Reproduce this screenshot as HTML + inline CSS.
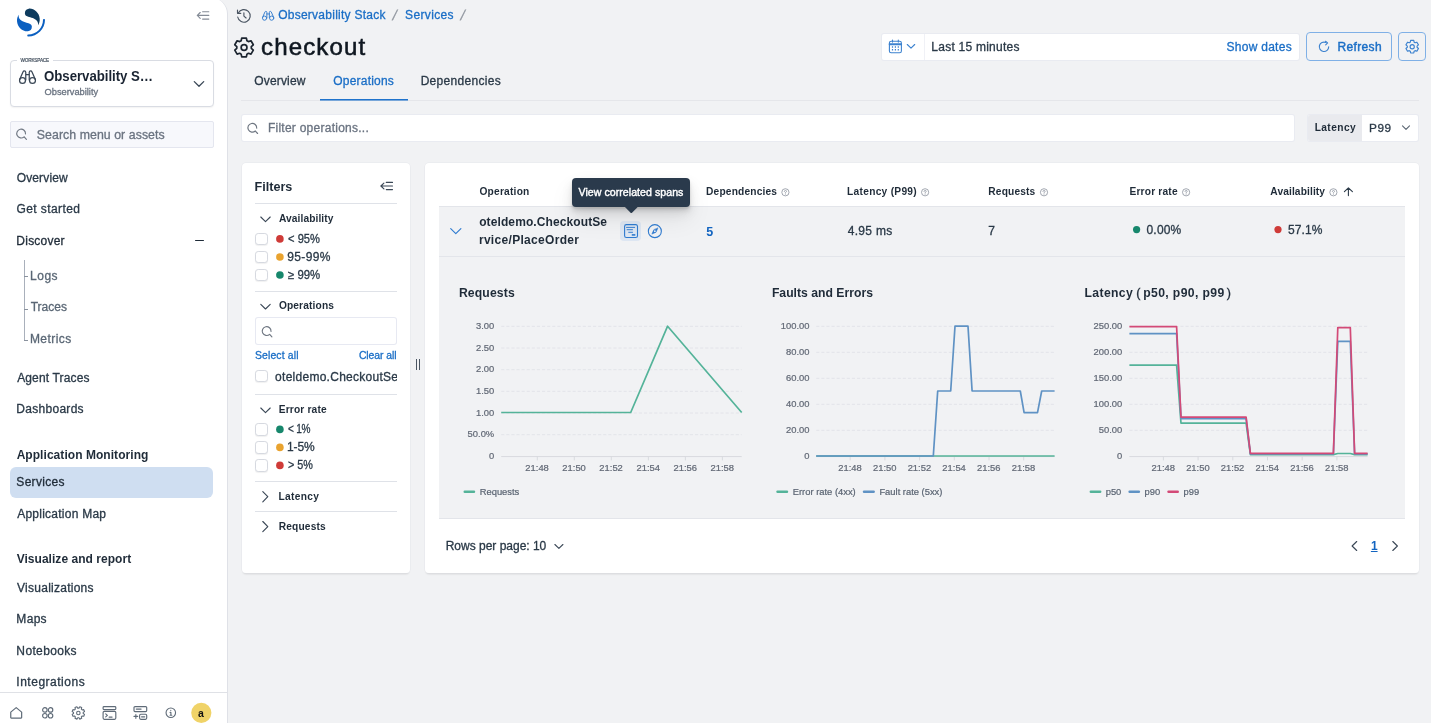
<!DOCTYPE html>
<html lang="en">
<head>
<meta charset="utf-8">
<title>checkout - Services - Observability Stack</title>
<style>
*{box-sizing:border-box;margin:0;padding:0}
html,body{width:1431px;height:723px;overflow:hidden}
body{position:relative;background:#f1f2f4;font-family:"Liberation Sans",Arial,sans-serif;font-size:12px;color:#2a3947}
a{color:inherit;text-decoration:none}
ul{list-style:none}
button{font:inherit;background:none;border:0}
h1,h2,h3{font-size:inherit;font-weight:inherit}
figure{margin:0}
.abs{position:absolute}
.t{position:absolute;white-space:nowrap;line-height:16px;font-size:12px;-webkit-text-stroke-width:.3px}
svg{position:absolute;overflow:visible}
#side{position:absolute;left:0;top:0;width:228px;height:723px;overflow:hidden;will-change:transform}
#main{position:absolute;left:0;top:0;width:1431px;height:723px;overflow:hidden;will-change:transform}
#sidebg{position:absolute;left:0;top:-2px;width:228px;height:725px;background:#fff;border-right:1px solid #dfe1e7;border-top-right-radius:16px}
#ws{position:absolute;left:10px;top:60.4px;width:204px;height:46.3px;border:1px solid #d9dce3;border-radius:4px;background:#fff;box-shadow:0 1px 1.5px rgba(0,0,0,.05)}
#srch{position:absolute;left:10px;top:121px;width:204px;height:26.8px;border:1px solid #e4e6ef;border-radius:2px;background:#f7f8fc}
.sel{position:absolute;left:10px;top:466.7px;width:203.3px;height:31.5px;border-radius:6px;background:#cfdef1}
#foot{position:absolute;left:0;top:692px;width:227px;height:31px;border-top:1px solid #dfe1e6;background:#fff}
.panel{position:absolute;background:#fff;border-radius:4px;box-shadow:0 0 0 .6px #e6e7eb,0 2px 2px -1px rgba(0,0,0,.17)}
.field{position:absolute;background:#fff;border-radius:2px;box-shadow:0 0 0 1px #e9ebf1}
.btn{position:absolute;border:1px solid #7fb0e6;border-radius:4px;background:transparent}
.chk{position:absolute;width:12.6px;height:12.6px;border:1px solid #d6d9e0;border-radius:3.2px;background:#fff;box-shadow:0 1px 1px rgba(0,0,0,.06)}
.dot{position:absolute;border-radius:50%}
.tip{position:absolute;background:#2a3a4c;border-radius:4px;box-shadow:0 12px 24px 0 rgba(0,0,0,.08),0 6px 12px 0 rgba(0,0,0,.09),0 4px 4px 0 rgba(0,0,0,.09),0 2px 2px 0 rgba(0,0,0,.09)}
.tiparrow{width:10.6px;height:10.6px;background:#2a3a4c;transform:rotate(45deg);border-radius:1px}
.pl,.pr{font-weight:normal;font-size:12.5px;-webkit-text-stroke-width:.35px}
.pl{padding:0 2.4px 0 0;margin-left:-.6px}
.pr{padding:0 0 0 2.2px}
</style>
</head>
<body>
<aside id="side" aria-label="Primary navigation">
<div id="sidebg"></div>
<svg style="left:17px;top:8px" width="29" height="30" viewBox="0 -1.37 66.29 68.57" role="img" aria-label="OpenSearch"><path d="M61.7374 23.5C60.4878 23.5 59.4748 24.513 59.4748 25.7626C59.4748 44.3813 44.3813 59.4748 25.7626 59.4748C24.513 59.4748 23.5 60.4878 23.5 61.7374C23.5 62.987 24.513 64 25.7626 64C46.8805 64 64 46.8805 64 25.7626C64 24.513 62.987 23.5 61.7374 23.5Z" fill="#0b5fc0"/><path d="M48.0814 38C50.2572 34.4505 52.3615 29.7178 51.9475 23.0921C51.0899 9.36725 38.6589 -1.04463 26.9206 0.0837327C22.3253 0.525465 17.6068 4.2712 18.026 10.9805C18.2082 13.8961 19.6352 15.6169 21.9544 16.9399C24.1618 18.1992 26.9978 18.9969 30.2128 19.9011C34.0962 20.9934 38.6009 22.2203 42.063 24.7717C46.2125 27.8295 49.0491 31.3743 48.0814 38Z" fill="#0d3b5e"/><path d="M3.91861 14C1.74276 17.5495 -0.361506 22.2822 0.0524931 28.9079C0.910072 42.6327 13.3411 53.0446 25.0794 51.9163C29.6747 51.4745 34.3932 47.7288 33.974 41.0195C33.7918 38.1039 32.3647 36.3831 30.0456 35.0601C27.8382 33.8008 25.0022 33.0031 21.7872 32.0989C17.9038 31.0066 13.3991 29.7797 9.93694 27.2283C5.78746 24.1705 2.95092 20.6257 3.91861 14Z" fill="#0b5fc0"/></svg>
<svg style="left:195px;top:9px" width="17" height="14" viewBox="0 0 17 14"><g fill="none" stroke="#858c97" stroke-width="1.15" stroke-linecap="round" stroke-linejoin="round"><path d="M7.6 2.7H13.8M2.3 6.4H13.8M7.6 10.1H13.8M5.2 3.5L2.3 6.4L5.2 9.3"/></g></svg>
<div id="ws">
<span class="wslabel"></span>
</div>
<span class="abs" style="left:17px;top:57px;width:36px;height:6px;background:#fff"></span>
<span class="t" style="left:20.49px;top:58px;font-size:4.7px;line-height:6px;color:#3a4756;letter-spacing:-0.18px;-webkit-text-stroke-width:.15px">WORKSPACE</span>
<svg style="left:18px;top:70px" width="20" height="16" viewBox="-0.9 -0.3 20 16"><g fill="none" stroke="#3a4756" stroke-width="1.25" stroke-linejoin="round" stroke-linecap="round"><circle cx="3.6" cy="10.2" r="2.95"/><circle cx="13.6" cy="10.2" r="2.95"/><path d="M0.75 9.3L4.1 1.6Q4.5 0.65 5.4 0.65Q6.8 0.65 6.85 2V9.6M16.45 9.3L13.1 1.6Q12.7 0.65 11.8 0.65Q10.4 0.65 10.35 2V9.6M6.85 4.3H10.35"/></g></svg>
<span class="t" style="left:43.94px;top:67px;font-size:14.4px;line-height:18px;color:#1a2432;font-weight:bold;-webkit-text-stroke-width:0;letter-spacing:-0.04px;transform:scaleX(0.92);transform-origin:0 50%">Observability S…</span>
<span class="t" style="left:44.52px;top:86px;font-size:9.3px;line-height:12px;color:#6a7380;letter-spacing:-0.01px">Observability</span>
<svg style="left:193px;top:80px" width="13" height="9" viewBox="0 0 13 9"><path d="M1.3 1.6L6 6.2L10.7 1.6" fill="none" stroke="#3a4756" stroke-width="1.3" stroke-linecap="round" stroke-linejoin="round"/></svg>
<div id="srch" role="search">
</div>
<svg style="left:15px;top:127px" width="14" height="15" viewBox="-0.5 -0.5 14 15"><g fill="none" stroke="#6f7782" stroke-width="1.15" stroke-linecap="round"><path d="M8.6 9.3A4.4 4.4 0 1 1 10 6.4"/><path d="M8.9 9.6L10.9 11.8"/></g></svg>
<span class="t" style="left:36.8px;top:127px;font-size:12.3px;color:#6a7380;letter-spacing:0.07px">Search menu or assets</span>
<nav><ul class="nav">
<li><a class="t" style="left:16.67px;top:170px;color:#2a3947;letter-spacing:0.15px">Overview</a></li>
<li><a class="t" style="left:16.44px;top:201px;color:#2a3947;letter-spacing:0.42px">Get started</a></li>
<li><a class="t" style="left:16.36px;top:233px;color:#1f2b38;letter-spacing:0.22px">Discover</a></li>
<li><a class="t" style="left:30px;top:268px;color:#5a6775;letter-spacing:0.52px">Logs</a></li>
<li><a class="t" style="left:30.7px;top:299px;color:#5a6775;letter-spacing:0.01px">Traces</a></li>
<li><a class="t" style="left:29.93px;top:331px;color:#5a6775;letter-spacing:0.45px">Metrics</a></li>
<li><a class="t" style="left:17.13px;top:370px;color:#2a3947;letter-spacing:0.16px">Agent Traces</a></li>
<li><a class="t" style="left:16.36px;top:401px;color:#2a3947;letter-spacing:0.28px">Dashboards</a></li>
<li class="hd"><span class="t" style="left:16.65px;top:447px;color:#1f2b38;font-weight:bold;-webkit-text-stroke-width:0;letter-spacing:0.05px">Application Monitoring</span></li>
<li><span class="sel"></span><a class="t" style="left:16.36px;top:474px;color:#1f2b38;letter-spacing:0.29px">Services</a></li>
<li><a class="t" style="left:17.13px;top:506px;color:#2a3947;letter-spacing:0.25px">Application Map</a></li>
<li class="hd"><span class="t" style="left:16.64px;top:551px;color:#1f2b38;font-weight:bold;-webkit-text-stroke-width:0;letter-spacing:0.04px">Visualize and report</span></li>
<li><a class="t" style="left:17.09px;top:580px;color:#2a3947;letter-spacing:0.25px">Visualizations</a></li>
<li><a class="t" style="left:16.36px;top:611px;color:#2a3947;letter-spacing:0.30px">Maps</a></li>
<li><a class="t" style="left:16.36px;top:643px;color:#2a3947;letter-spacing:0.36px">Notebooks</a></li>
<li><a class="t" style="left:16.33px;top:674px;color:#2a3947;letter-spacing:0.51px">Integrations</a></li>
</ul></nav>
<span class="abs" style="left:195.4px;top:239.6px;width:8.8px;height:1.7px;background:#1f2b38;border-radius:1px"></span>
<span class="abs" style="left:24px;top:260px;width:1px;height:81px;background:#a9b0bb"></span>
<span class="abs" style="left:24px;top:276.3px;width:3.5px;height:1px;background:#8a929e"></span>
<span class="abs" style="left:24px;top:308.5px;width:3.5px;height:1px;background:#8a929e"></span>
<span class="abs" style="left:24px;top:340.2px;width:3.5px;height:1px;background:#8a929e"></span>
<div id="foot"></div>
<svg style="left:10px;top:706px" width="14" height="14" viewBox="-0.1 -0.9 14 14"><path d="M0.65 10.6V5.2L6.1 0.75L11.55 5.2V10.6Q11.55 11.15 11 11.15H1.2Q0.65 11.15 0.65 10.6Z" fill="none" stroke="#5f6b78" stroke-width="1.2" stroke-linejoin="round"/></svg>
<svg style="left:42px;top:707px" width="13" height="13" viewBox="0 0 13 13"><g fill="none" stroke="#5f6b78" stroke-width="1.15"><circle cx="2.85" cy="2.9" r="2.25"/><circle cx="8.55" cy="2.9" r="2.25"/><circle cx="2.85" cy="8.7" r="2.25"/><circle cx="8.55" cy="8.7" r="2.25"/></g></svg>
<svg style="left:71px;top:706px" width="16" height="15" viewBox="-0.4 0 16 15"><g fill="none" stroke="#5f6b78" stroke-width="1.1" stroke-linejoin="round"><path d="M11.81 7.55 L13.13 8.40 L12.35 10.29 L10.81 9.96 L9.96 10.81 L10.29 12.35 L8.40 13.13 L7.55 11.81 L6.35 11.81 L5.50 13.13 L3.61 12.35 L3.94 10.81 L3.09 9.96 L1.55 10.29 L0.77 8.40 L2.09 7.55 L2.09 6.35 L0.77 5.50 L1.55 3.61 L3.09 3.94 L3.94 3.09 L3.61 1.55 L5.50 0.77 L6.35 2.09 L7.55 2.09 L8.40 0.77 L10.29 1.55 L9.96 3.09 L10.81 3.94 L12.35 3.61 L13.13 5.50 L11.81 6.35Z"/><circle cx="6.95" cy="6.95" r="1.75"/></g></svg>
<svg style="left:102px;top:706px" width="16" height="15" viewBox="-0.5 0 16 15"><g fill="none" stroke="#5f6b78" stroke-width="1.15" stroke-linejoin="round" stroke-linecap="round"><rect x="0.6" y="0.6" width="12.7" height="3" rx="0.9"/><rect x="0.6" y="5.4" width="12.7" height="7.9" rx="1.2"/><path d="M3.2 7.9L4.9 9.4L3.2 10.9M6.6 11.1H9.6"/></g></svg>
<svg style="left:133px;top:706px" width="16" height="15" viewBox="-0.4 0 16 15"><g fill="none" stroke="#5f6b78" stroke-width="1.15" stroke-linejoin="round" stroke-linecap="round"><rect x="0.6" y="0.6" width="12.7" height="5" rx="1"/><path d="M3 3.1H7.6" stroke-width="1.4"/><rect x="6.2" y="8.2" width="7.1" height="5.1" rx="1.2"/><path d="M8.2 10.8H11.3" stroke-width="1.3"/><path d="M0.6 10.4H4.3M2.45 8.5V12.3"/></g></svg>
<svg style="left:165px;top:707px" width="13" height="13" viewBox="-0.3 -0.3 13 13"><g fill="none" stroke="#5f6b78" stroke-width="1.1" stroke-linecap="round"><circle cx="5.5" cy="5.5" r="4.75"/><path d="M5.6 5.1V7.9M4.8 5.1H5.6M4.8 8H6.5"/><circle cx="5.5" cy="3.1" r="0.55" fill="#5f6b78" stroke="none"/></g></svg>
<svg style="left:191px;top:702px" width="22" height="22" viewBox="-0.2 -0.7 22 22"><circle cx="10.1" cy="10.1" r="10.1" fill="#f0d368"/></svg>
<span class="t" style="left:198.06px;top:707px;font-size:10.5px;line-height:12px;color:#111;font-weight:bold;-webkit-text-stroke-width:0">a</span>
</aside>
<main id="main">
<header id="top">
<nav aria-label="Breadcrumb">
<svg style="left:236px;top:8px" width="18" height="17" viewBox="-0.1 -0.4 18 17"><g fill="none" stroke="#4a5562" stroke-width="1.15" stroke-linecap="round" stroke-linejoin="round"><path d="M2.2 4.6A6.3 6.3 0 1 1 1.6 8.6"/><path d="M1.4 1.6V4.9H4.7"/><path d="M7.8 4.3V7.7L10 9.6"/></g></svg>
<svg style="left:262px;top:10px" width="14" height="12" viewBox="0 -1.27 19.72 16.9"><g fill="none" stroke="#3c82cf" stroke-width="1.40845" stroke-linejoin="round" stroke-linecap="round"><circle cx="3.6" cy="10.2" r="2.95"/><circle cx="13.6" cy="10.2" r="2.95"/><path d="M0.75 9.3L4.1 1.6Q4.5 0.65 5.4 0.65Q6.8 0.65 6.85 2V9.6M16.45 9.3L13.1 1.6Q12.7 0.65 11.8 0.65Q10.4 0.65 10.35 2V9.6M6.85 4.3H10.35"/></g></svg>
<a class="t" style="left:278.13px;top:7px;color:#1a6ec6;letter-spacing:0.26px">Observability Stack</a>
<span class="t" style="left:392.7px;top:7px;font-size:14.5px;color:#90969f;-webkit-text-stroke-width:.15px;transform:skewX(-13deg)">/</span>
<a class="t" style="left:405.02px;top:7px;color:#1a6ec6;letter-spacing:0.36px">Services</a>
<span class="t" style="left:461.3px;top:7px;font-size:14.5px;color:#90969f;-webkit-text-stroke-width:.15px;transform:skewX(-13deg)">/</span>
</nav>
<svg style="left:233px;top:36px" width="23" height="24" viewBox="-0.3 -0.7 23 24"><g fill="none" stroke="#1c2530" stroke-width="1.7" stroke-linejoin="round"><path d="M13.63 17.46 L13.08 20.12 L8.42 20.12 L7.87 17.46 L6.38 16.60 L3.80 17.45 L1.48 13.42 L3.50 11.61 L3.50 9.89 L1.48 8.08 L3.80 4.05 L6.38 4.90 L7.87 4.04 L8.42 1.38 L13.08 1.38 L13.63 4.04 L15.12 4.90 L17.70 4.05 L20.02 8.08 L18.00 9.89 L18.00 11.61 L20.02 13.42 L17.70 17.45 L15.12 16.60Z"/><circle cx="10.75" cy="10.75" r="2.9"/></g></svg>
<h1 class="t" style="left:261.08px;top:32px;font-size:24.1px;line-height:30px;color:#0f1720;letter-spacing:1.08px;font-weight:normal;-webkit-text-stroke-width:.55px">checkout</h1>
<div class="field" style="left:881.5px;top:33.5px;width:417px;height:26.5px"></div>
<span class="abs" style="left:924px;top:34px;width:1px;height:26px;background:#f0f1f6"></span>
<svg style="left:888px;top:39px" width="16" height="16" viewBox="-0.5 -0.5 16 16"><g fill="none" stroke="#3c82cf" stroke-width="1.1" stroke-linejoin="round" stroke-linecap="round"><rect x="0.9" y="1.8" width="12" height="11.4" rx="1.8"/><path d="M1.2 4.7H12.6" stroke-width="2"/><path d="M4 0.6V2.6M9.8 0.6V2.6"/><path d="M3.4 7.6H4.6M6.3 7.6H7.5M9.2 7.6H10.4M3.4 10.2H4.6M6.3 10.2H7.5M9.2 10.2H10.4" stroke-width="1.5" stroke-linecap="butt"/></g></svg>
<svg style="left:906px;top:43px" width="11" height="8" viewBox="-0.5 -0.5 11 8"><path d="M0.8 1L4.5 4.6L8.2 1" fill="none" stroke="#3c82cf" stroke-width="1.1" stroke-linecap="round" stroke-linejoin="round"/></svg>
<span class="t" style="left:931.36px;top:39px;color:#2a3947;letter-spacing:0.24px">Last 15 minutes</span>
<a class="t" style="left:1226.51px;top:39px;color:#1a6ec6;letter-spacing:0.27px">Show dates</a>
<button class="btn" style="left:1306px;top:32px;width:86px;height:29px" aria-label="Refresh"></button>
<svg style="left:1318px;top:40px" width="14" height="14" viewBox="-0.3 -0.6 14 14"><g fill="none" stroke="#3c82cf" stroke-width="1.15" stroke-linecap="round" stroke-linejoin="round"><path d="M10.4 6.2A4.7 4.7 0 1 1 7.6 1.9"/><path d="M7.2 0.7L9.3 2.3L7.4 4.2" /></g></svg>
<span class="t" style="left:1337.4px;top:39px;color:#1a6ec6;letter-spacing:0.36px;-webkit-text-stroke-width:.42px">Refresh</span>
<button class="btn" style="left:1398px;top:32px;width:28px;height:29px" aria-label="Settings"></button>
<svg style="left:1404px;top:39px" width="17" height="17" viewBox="-0.7 -0.2 17 17"><g fill="none" stroke="#3c82cf" stroke-width="1.15" stroke-linejoin="round"><path d="M9.43 12.00 L9.07 13.81 L5.93 13.81 L5.57 12.00 L4.57 11.43 L2.82 12.01 L1.25 9.30 L2.63 8.08 L2.63 6.92 L1.25 5.70 L2.82 2.99 L4.57 3.57 L5.57 3.00 L5.93 1.19 L9.07 1.19 L9.43 3.00 L10.43 3.57 L12.18 2.99 L13.75 5.70 L12.37 6.92 L12.37 8.08 L13.75 9.30 L12.18 12.01 L10.43 11.43Z"/><circle cx="7.5" cy="7.5" r="2.1"/></g></svg>
<div role="tablist">
<span class="abs" style="left:241px;top:99.6px;width:1178px;height:1px;background:#e5e6ea"></span>
<span class="t" style="left:254.33px;top:73px;color:#2a3947;letter-spacing:0.15px" role="tab">Overview</span>
<span class="t" style="left:333.29px;top:73px;color:#1a6ec6;letter-spacing:0.20px" role="tab" aria-selected="true">Operations</span>
<span class="t" style="left:420.63px;top:73px;color:#2a3947;letter-spacing:0.30px" role="tab">Dependencies</span>
<span class="abs" style="left:319.7px;top:99px;width:88.1px;height:2px;background:linear-gradient(#1f73cc 50%,rgba(31,115,204,.55) 50%)"></span>
</div>
<div class="field" style="left:241.5px;top:114.7px;width:1052px;height:26.5px"></div>
<svg style="left:246px;top:121px" width="14" height="15" viewBox="-0.7 -0.7 14 15"><g fill="none" stroke="#6f7782" stroke-width="1.15" stroke-linecap="round"><path d="M8.6 9.3A4.4 4.4 0 1 1 10 6.4"/><path d="M8.9 9.6L10.9 11.8"/></g></svg>
<span class="t" style="left:267.94px;top:120px;color:#6a7380;letter-spacing:0.25px">Filter operations...</span>
<div class="field" style="left:1308px;top:114.7px;width:110px;height:26.5px"></div>
<span class="abs" style="left:1307.5px;top:114.7px;width:54.5px;height:26.5px;background:#e9eaee;border-radius:2px 0 0 2px"></span>
<span class="t" style="left:1314.66px;top:120px;font-size:10.2px;color:#1f2b38;font-weight:bold;-webkit-text-stroke-width:0;letter-spacing:0.41px">Latency</span>
<span class="t" style="left:1368.9px;top:120px;font-size:11.8px;color:#2a3947;letter-spacing:0.65px">P99</span>
<svg style="left:1401px;top:124px" width="11" height="8" viewBox="-0.6 -0.9 11 8"><path d="M0.9 1L4.4 4.4L7.9 1" fill="none" stroke="#5a6572" stroke-width="1.1" stroke-linecap="round" stroke-linejoin="round"/></svg>
</header>
<section class="panel" style="left:241.5px;top:162.7px;width:168.6px;height:410.3px" aria-label="Filters"></section>
<div id="filters">
<h2 class="t" style="left:254.6px;top:178px;font-size:12.6px;line-height:18px;color:#1f2b38;font-weight:bold;-webkit-text-stroke-width:0;letter-spacing:-0.02px">Filters</h2>
<svg style="left:379px;top:180px" width="16" height="14" viewBox="-0.7 -0.2 16 14"><g fill="none" stroke="#3a4756" stroke-width="1.15" stroke-linecap="round" stroke-linejoin="round"><path d="M6.6 2.2H12.8M1.2 5.8H12.8M6.6 9.4H12.8M4.2 2.9L1.2 5.8L4.2 8.7"/></g></svg>
<span class="abs" style="left:255.3px;top:203.0px;width:141.3px;height:1px;background:#dfe2e8"></span>
<svg style="left:260px;top:216px" width="12" height="9" viewBox="0 -0.2 12 9"><path d="M0.8 0.8L5.5 5.4L10.2 0.8" fill="none" stroke="#3a4756" stroke-width="1.1" stroke-linecap="round" stroke-linejoin="round"/></svg>
<h3 class="t" style="left:278.91px;top:211px;font-size:10.2px;color:#1f2b38;font-weight:bold;-webkit-text-stroke-width:0;letter-spacing:0.10px">Availability</h3>
<span class="chk" style="left:255.3px;top:232.7px"></span>
<svg style="left:274px;top:233px" width="12" height="12" viewBox="-0.9 -0.9 12 12"><circle cx="5" cy="5" r="3.8" fill="#cf3b38"/></svg>
<label class="t" style="left:287.66px;top:231px;color:#2a3947;letter-spacing:0.01px;transform:scaleX(0.93);transform-origin:0 50%">&lt; 95%</label>
<span class="chk" style="left:255.3px;top:250.7px"></span>
<svg style="left:274px;top:252px" width="12" height="11" viewBox="-0.9 0 12 11"><circle cx="5" cy="5" r="3.8" fill="#e9a32f"/></svg>
<label class="t" style="left:287.27px;top:249px;color:#2a3947;letter-spacing:0.34px">95-99%</label>
<span class="chk" style="left:255.3px;top:268.8px"></span>
<svg style="left:274px;top:270px" width="12" height="11" viewBox="-0.9 0 12 11"><circle cx="5" cy="5" r="3.8" fill="#17876c"/></svg>
<label class="t" style="left:287.74px;top:267px;color:#2a3947;letter-spacing:-0.01px;transform:scaleX(0.95);transform-origin:0 50%">≥ 99%</label>
<span class="abs" style="left:255.3px;top:290.9px;width:141.3px;height:1px;background:#dfe2e8"></span>
<svg style="left:260px;top:303px" width="12" height="9" viewBox="0 -0.6 12 9"><path d="M0.8 0.8L5.5 5.4L10.2 0.8" fill="none" stroke="#3a4756" stroke-width="1.1" stroke-linecap="round" stroke-linejoin="round"/></svg>
<h3 class="t" style="left:278.89px;top:298px;font-size:10.2px;color:#1f2b38;font-weight:bold;-webkit-text-stroke-width:0;letter-spacing:0.14px">Operations</h3>
<div class="field" style="left:255.8px;top:317.8px;width:140.3px;height:26.4px;box-shadow:0 0 0 1px #e7e9f2"></div>
<svg style="left:261px;top:325px" width="13" height="14" viewBox="0 0 13 14"><g fill="none" stroke="#6f7782" stroke-width="1.15" stroke-linecap="round"><path d="M8.6 9.3A4.4 4.4 0 1 1 10 6.4"/><path d="M8.9 9.6L10.9 11.8"/></g></svg>
<a class="t" style="left:254.9px;top:348px;font-size:10.4px;color:#1a6ec6;letter-spacing:0.17px">Select all</a>
<a class="t" style="left:358.92px;top:348px;font-size:10.4px;color:#1a6ec6;letter-spacing:-0.06px">Clear all</a>
<span class="chk" style="left:255.3px;top:369.6px"></span>
<span class="abs" style="left:275px;top:366px;width:121.8px;height:20px;overflow:hidden"><label class="t" style="left:0.1px;top:3px;color:#2a3947;letter-spacing:0.27px">oteldemo.CheckoutService/PlaceOrder</label></span>
<span class="abs" style="left:255.3px;top:394.3px;width:141.3px;height:1px;background:#dfe2e8"></span>
<svg style="left:260px;top:407px" width="12" height="9" viewBox="0 -0.2 12 9"><path d="M0.8 0.8L5.5 5.4L10.2 0.8" fill="none" stroke="#3a4756" stroke-width="1.1" stroke-linecap="round" stroke-linejoin="round"/></svg>
<h3 class="t" style="left:278.7px;top:402px;font-size:10.2px;color:#1f2b38;font-weight:bold;-webkit-text-stroke-width:0;letter-spacing:0.17px">Error rate</h3>
<span class="chk" style="left:255.3px;top:423.1px"></span>
<svg style="left:274px;top:424px" width="12" height="12" viewBox="-0.9 -0.4 12 12"><circle cx="5" cy="5" r="3.8" fill="#17876c"/></svg>
<label class="t" style="left:287.93px;top:421px;color:#2a3947;letter-spacing:-0.30px;transform:scaleX(0.84);transform-origin:0 50%">&lt; 1%</label>
<span class="chk" style="left:255.3px;top:441px"></span>
<svg style="left:274px;top:442px" width="12" height="12" viewBox="-0.9 -0.4 12 12"><circle cx="5" cy="5" r="3.8" fill="#e9a32f"/></svg>
<label class="t" style="left:287.1px;top:439px;color:#2a3947;letter-spacing:-0.15px">1-5%</label>
<span class="chk" style="left:255.3px;top:459px"></span>
<svg style="left:274px;top:460px" width="12" height="12" viewBox="-0.9 -0.4 12 12"><circle cx="5" cy="5" r="3.8" fill="#cf3b38"/></svg>
<label class="t" style="left:287.56px;top:457px;color:#2a3947;letter-spacing:-0.00px;transform:scaleX(0.9);transform-origin:0 50%">&gt; 5%</label>
<span class="abs" style="left:255.3px;top:481.3px;width:141.3px;height:1px;background:#dfe2e8"></span>
<svg style="left:261px;top:490px" width="9" height="14" viewBox="-0.9 -0.7 9 14"><path d="M0.9 0.9L5.9 6L0.9 11.1" fill="none" stroke="#3a4756" stroke-width="1.15" stroke-linecap="round" stroke-linejoin="round"/></svg>
<h3 class="t" style="left:278.58px;top:489px;font-size:10.2px;color:#1f2b38;font-weight:bold;-webkit-text-stroke-width:0;letter-spacing:0.30px">Latency</h3>
<span class="abs" style="left:255.3px;top:510.9px;width:141.3px;height:1px;background:#dfe2e8"></span>
<svg style="left:261px;top:520px" width="9" height="14" viewBox="-0.9 -0.6 9 14"><path d="M0.9 0.9L5.9 6L0.9 11.1" fill="none" stroke="#3a4756" stroke-width="1.15" stroke-linecap="round" stroke-linejoin="round"/></svg>
<h3 class="t" style="left:278.65px;top:519px;font-size:10.2px;color:#1f2b38;font-weight:bold;-webkit-text-stroke-width:0;letter-spacing:0.17px">Requests</h3>
</div>
<span class="abs" style="left:415.6px;top:359px;width:1.2px;height:10.6px;background:#4a5562"></span>
<span class="abs" style="left:418.6px;top:359px;width:1.2px;height:10.6px;background:#4a5562"></span>
<section class="panel" style="left:425.2px;top:162.7px;width:993.6px;height:410.3px" aria-label="Operations"></section>
<div id="ops" role="table">
<span class="abs" style="left:438.6px;top:206.3px;width:966.2px;height:312.4px;background:#f1f2f4"></span>
<span class="abs" style="left:438.6px;top:206px;width:966.2px;height:1px;background:#e3e5ea"></span>
<span class="abs" style="left:438.6px;top:256px;width:966.2px;height:1px;background:#e3e5ea"></span>
<span class="abs" style="left:438.6px;top:518.2px;width:966.2px;height:1px;background:#e3e5ea"></span>
<span class="t" style="left:479.38px;top:184px;font-size:10.2px;color:#1f2b38;font-weight:bold;-webkit-text-stroke-width:0;letter-spacing:0.23px" role="columnheader">Operation</span>
<span class="t" style="left:706.1px;top:184px;font-size:10.2px;color:#1f2b38;font-weight:bold;-webkit-text-stroke-width:0;letter-spacing:0.17px" role="columnheader">Dependencies</span>
<svg style="left:781px;top:188px" width="10" height="10" viewBox="-0.2 -0.1 10 10"><circle cx="4.2" cy="4.2" r="3.6" fill="none" stroke="#8b929d" stroke-width="0.8"/><path d="M3.1 3.4Q3.2 2.3 4.2 2.3Q5.3 2.3 5.3 3.3Q5.3 4 4.2 4.5V5.1" fill="none" stroke="#8b929d" stroke-width="0.75" stroke-linecap="round"/><circle cx="4.2" cy="6.2" r="0.45" fill="#8b929d"/></svg>
<span class="t" style="left:847.1px;top:184px;font-size:10.2px;color:#1f2b38;font-weight:bold;-webkit-text-stroke-width:0;letter-spacing:0.28px" role="columnheader">Latency (P99)</span>
<svg style="left:920px;top:188px" width="11" height="10" viewBox="-0.9 -0.1 11 10"><circle cx="4.2" cy="4.2" r="3.6" fill="none" stroke="#8b929d" stroke-width="0.8"/><path d="M3.1 3.4Q3.2 2.3 4.2 2.3Q5.3 2.3 5.3 3.3Q5.3 4 4.2 4.5V5.1" fill="none" stroke="#8b929d" stroke-width="0.75" stroke-linecap="round"/><circle cx="4.2" cy="6.2" r="0.45" fill="#8b929d"/></svg>
<span class="t" style="left:988.3px;top:184px;font-size:10.2px;color:#1f2b38;font-weight:bold;-webkit-text-stroke-width:0;letter-spacing:0.16px" role="columnheader">Requests</span>
<svg style="left:1039px;top:188px" width="11" height="10" viewBox="-0.8 -0.1 11 10"><circle cx="4.2" cy="4.2" r="3.6" fill="none" stroke="#8b929d" stroke-width="0.8"/><path d="M3.1 3.4Q3.2 2.3 4.2 2.3Q5.3 2.3 5.3 3.3Q5.3 4 4.2 4.5V5.1" fill="none" stroke="#8b929d" stroke-width="0.75" stroke-linecap="round"/><circle cx="4.2" cy="6.2" r="0.45" fill="#8b929d"/></svg>
<span class="t" style="left:1129.4px;top:184px;font-size:10.2px;color:#1f2b38;font-weight:bold;-webkit-text-stroke-width:0;letter-spacing:0.20px" role="columnheader">Error rate</span>
<svg style="left:1181px;top:188px" width="11" height="10" viewBox="-0.9 -0.1 11 10"><circle cx="4.2" cy="4.2" r="3.6" fill="none" stroke="#8b929d" stroke-width="0.8"/><path d="M3.1 3.4Q3.2 2.3 4.2 2.3Q5.3 2.3 5.3 3.3Q5.3 4 4.2 4.5V5.1" fill="none" stroke="#8b929d" stroke-width="0.75" stroke-linecap="round"/><circle cx="4.2" cy="6.2" r="0.45" fill="#8b929d"/></svg>
<span class="t" style="left:1270.3px;top:184px;font-size:10.2px;color:#1f2b38;font-weight:bold;-webkit-text-stroke-width:0;letter-spacing:0.12px" role="columnheader">Availability</span>
<svg style="left:1329px;top:188px" width="10" height="10" viewBox="-0.2 -0.1 10 10"><circle cx="4.2" cy="4.2" r="3.6" fill="none" stroke="#8b929d" stroke-width="0.8"/><path d="M3.1 3.4Q3.2 2.3 4.2 2.3Q5.3 2.3 5.3 3.3Q5.3 4 4.2 4.5V5.1" fill="none" stroke="#8b929d" stroke-width="0.75" stroke-linecap="round"/><circle cx="4.2" cy="6.2" r="0.45" fill="#8b929d"/></svg>
<svg style="left:1343px;top:186px" width="12" height="12" viewBox="0 -0.6 12 12"><path d="M5.4 9V1.4M1.4 5L5.4 1.2L9.4 5" fill="none" stroke="#2a3947" stroke-width="1.1" stroke-linecap="round" stroke-linejoin="round"/></svg>
<svg style="left:449px;top:227px" width="14" height="9" viewBox="-0.8 -0.8 14 9"><path d="M0.9 0.9L6 5.9L11.1 0.9" fill="none" stroke="#2f7bd0" stroke-width="1.15" stroke-linecap="round" stroke-linejoin="round"/></svg>
<span class="t" style="left:479.2px;top:213px;line-height:18px;color:#1f2b38;font-weight:bold;-webkit-text-stroke-width:0;letter-spacing:0.10px">oteldemo.CheckoutSe</span>
<span class="t" style="left:478.92px;top:231px;line-height:18px;color:#1f2b38;font-weight:bold;-webkit-text-stroke-width:0;letter-spacing:0.31px">rvice/PlaceOrder</span>
<span class="abs" style="left:620.4px;top:220.7px;width:20.6px;height:20.3px;border-radius:4px;background:#dde6f2"></span>
<svg style="left:623px;top:223px" width="17" height="17" viewBox="-0.9 -0.9 17 17"><g fill="none" stroke="#2f7bd0" stroke-width="1.1" stroke-linecap="round" stroke-linejoin="round"><rect x="0.7" y="0.7" width="12.9" height="12.9" rx="1.8"/><path d="M2.6 3.5H10.8M3.2 5.8H8.6M4.8 8.4H8.6" stroke-width="0.95"/><path d="M7.9 11H11.4" stroke-width="1.6" stroke-linecap="butt"/></g></svg>
<svg style="left:647px;top:223px" width="17" height="17" viewBox="-0.6 -0.9 17 17"><g fill="none" stroke="#2f7bd0" stroke-width="1.1" stroke-linecap="round" stroke-linejoin="round"><circle cx="7.25" cy="7.25" r="6.5"/><path d="M10.2 4.3L8.4 8.4L4.3 10.2L6.1 6.1Z" fill="#2f7bd0" stroke-width="0.6"/><circle cx="7.25" cy="7.25" r="0.9" fill="#f1f2f4" stroke="none"/></g></svg>
<a class="t" style="left:706.26px;top:224px;font-size:12.5px;color:#1264c0;font-weight:bold;-webkit-text-stroke-width:0">5</a>
<span class="t" style="left:847.72px;top:223px;color:#2a3947;letter-spacing:0.32px">4.95 ms</span>
<span class="t" style="left:988.3px;top:223px;color:#2a3947">7</span>
<svg style="left:1131px;top:224px" width="12" height="12" viewBox="-0.6 -0.6 12 12"><circle cx="5" cy="5" r="3.6" fill="#17876c"/></svg>
<span class="t" style="left:1146.51px;top:222px;color:#2a3947;letter-spacing:0.19px">0.00%</span>
<svg style="left:1273px;top:224px" width="11" height="12" viewBox="0 -0.6 11 12"><circle cx="5" cy="5" r="3.6" fill="#cf3b38"/></svg>
<span class="t" style="left:1288px;top:222px;color:#2a3947;letter-spacing:0.09px">57.1%</span>
<div role="tooltip" class="tip" style="left:571.8px;top:178.2px;width:118.4px;height:28.6px"></div>
<span class="abs tiparrow" style="left:625.5px;top:200.2px"></span>
<span class="t" style="left:578.55px;top:184px;font-size:10.6px;color:#fff;letter-spacing:0.04px;-webkit-text-stroke-width:.4px">View correlated spans</span>
<span class="t" style="left:445.72px;top:538px;color:#2a3947;letter-spacing:-0.01px">Rows per page: 10</span>
<svg style="left:553px;top:543px" width="12" height="9" viewBox="-0.9 -0.3 12 9"><path d="M1 1.2L5 5L9 1.2" fill="none" stroke="#3a4756" stroke-width="1.1" stroke-linecap="round" stroke-linejoin="round"/></svg>
<svg style="left:1350px;top:540px" width="10" height="13" viewBox="-0.6 0 10 13"><path d="M6.1 1.5L1.5 6L6.1 10.5" fill="none" stroke="#3a4756" stroke-width="1.1" stroke-linecap="round" stroke-linejoin="round"/></svg>
<a class="t" style="left:1370.9px;top:538px;color:#1264c0;font-weight:bold;-webkit-text-stroke-width:0;text-decoration:underline">1</a>
<svg style="left:1391px;top:540px" width="9" height="13" viewBox="0 0 9 13"><path d="M1.8 1.5L6.4 6L1.8 10.5" fill="none" stroke="#3a4756" stroke-width="1.1" stroke-linecap="round" stroke-linejoin="round"/></svg>
</div>
<div id="charts">
<figure>
<figcaption class="t" style="left:458.9px;top:285px;font-size:12.2px;color:#1f2b38;font-weight:bold;-webkit-text-stroke-width:0;letter-spacing:0.13px">Requests</figcaption>
<svg style="left:0;top:0" width="1431" height="723" viewBox="0 0 1431 723" font-family="Liberation Sans, Arial, sans-serif" role="img" aria-label="Requests chart"><line x1="501.2" y1="326.35" x2="741.7" y2="326.35" stroke="#dfe1e7" stroke-width="0.8" stroke-dasharray="3.1 2"/><line x1="501.2" y1="348.02" x2="741.7" y2="348.02" stroke="#dfe1e7" stroke-width="0.8" stroke-dasharray="3.1 2"/><line x1="501.2" y1="369.68" x2="741.7" y2="369.68" stroke="#dfe1e7" stroke-width="0.8" stroke-dasharray="3.1 2"/><line x1="501.2" y1="391.35" x2="741.7" y2="391.35" stroke="#dfe1e7" stroke-width="0.8" stroke-dasharray="3.1 2"/><line x1="501.2" y1="413.02" x2="741.7" y2="413.02" stroke="#dfe1e7" stroke-width="0.8" stroke-dasharray="3.1 2"/><line x1="501.2" y1="434.68" x2="741.7" y2="434.68" stroke="#dfe1e7" stroke-width="0.8" stroke-dasharray="3.1 2"/><line x1="501.2" y1="456.55" x2="741.7" y2="456.55" stroke="#d6d8dd" stroke-width="0.9"/><line x1="537.3" y1="456.5" x2="537.3" y2="460.4" stroke="#d6d8dd" stroke-width="0.9"/><line x1="574.3" y1="456.5" x2="574.3" y2="460.4" stroke="#d6d8dd" stroke-width="0.9"/><line x1="611.3" y1="456.5" x2="611.3" y2="460.4" stroke="#d6d8dd" stroke-width="0.9"/><line x1="648.4" y1="456.5" x2="648.4" y2="460.4" stroke="#d6d8dd" stroke-width="0.9"/><line x1="685.4" y1="456.5" x2="685.4" y2="460.4" stroke="#d6d8dd" stroke-width="0.9"/><line x1="722.4" y1="456.5" x2="722.4" y2="460.4" stroke="#d6d8dd" stroke-width="0.9"/><polyline points="501.2,412.5 630.7,412.5 667.6,326.2 741.7,412.5" fill="none" stroke="#54b399" stroke-width="1.7" stroke-linejoin="round" stroke-linecap="butt"/><g font-size="9.4" fill="#626976" stroke="#626976" stroke-width=".22" text-anchor="end"><text x="494.2" y="328.9">3.00</text><text x="494.2" y="350.6">2.50</text><text x="494.2" y="372.2">2.00</text><text x="494.2" y="393.9">1.50</text><text x="494.2" y="415.6">1.00</text><text x="494.2" y="437.2">50.0%</text><text x="494.2" y="458.9">0</text></g><g font-size="9.4" fill="#626976" stroke="#626976" stroke-width=".22" text-anchor="middle"><text x="537.1" y="470.7">21:48</text><text x="574.1" y="470.7">21:50</text><text x="611.1" y="470.7">21:52</text><text x="648.2" y="470.7">21:54</text><text x="685.2" y="470.7">21:56</text><text x="722.2" y="470.7">21:58</text></g><line x1="464.7" y1="491.8" x2="474.0" y2="491.8" stroke="#54b399" stroke-width="2.4" stroke-linecap="round"/><g font-size="9.4" fill="#5a6472" stroke="#5a6472" stroke-width=".2"><text x="479.7" y="495.1">Requests</text></g></svg>
</figure>
<figure>
<figcaption class="t" style="left:771.9px;top:285px;font-size:12.2px;color:#1f2b38;font-weight:bold;-webkit-text-stroke-width:0;letter-spacing:0.01px">Faults and Errors</figcaption>
<svg style="left:0;top:0" width="1431" height="723" viewBox="0 0 1431 723" font-family="Liberation Sans, Arial, sans-serif" role="img" aria-label="Faults and Errors chart"><line x1="816.2" y1="326.35" x2="1054.6" y2="326.35" stroke="#dfe1e7" stroke-width="0.8" stroke-dasharray="3.1 2"/><line x1="816.2" y1="352.35" x2="1054.6" y2="352.35" stroke="#dfe1e7" stroke-width="0.8" stroke-dasharray="3.1 2"/><line x1="816.2" y1="378.35" x2="1054.6" y2="378.35" stroke="#dfe1e7" stroke-width="0.8" stroke-dasharray="3.1 2"/><line x1="816.2" y1="404.35" x2="1054.6" y2="404.35" stroke="#dfe1e7" stroke-width="0.8" stroke-dasharray="3.1 2"/><line x1="816.2" y1="430.35" x2="1054.6" y2="430.35" stroke="#dfe1e7" stroke-width="0.8" stroke-dasharray="3.1 2"/><line x1="816.2" y1="456.55" x2="1054.6" y2="456.55" stroke="#d6d8dd" stroke-width="0.9"/><line x1="850.2" y1="456.5" x2="850.2" y2="460.4" stroke="#d6d8dd" stroke-width="0.9"/><line x1="884.9" y1="456.5" x2="884.9" y2="460.4" stroke="#d6d8dd" stroke-width="0.9"/><line x1="919.6" y1="456.5" x2="919.6" y2="460.4" stroke="#d6d8dd" stroke-width="0.9"/><line x1="954.3" y1="456.5" x2="954.3" y2="460.4" stroke="#d6d8dd" stroke-width="0.9"/><line x1="989.0" y1="456.5" x2="989.0" y2="460.4" stroke="#d6d8dd" stroke-width="0.9"/><line x1="1023.7" y1="456.5" x2="1023.7" y2="460.4" stroke="#d6d8dd" stroke-width="0.9"/><polyline points="816.2,456.0 1054.6,456.0" fill="none" stroke="#54b399" stroke-width="1.7" stroke-linejoin="round" stroke-linecap="butt"/><polyline points="816.2,456.0 933.3,456.0 937.7,391.0 950.7,391.0 955.0,326.2 968.0,326.2 972.1,391.0 1020.3,391.0 1024.1,412.7 1037.5,412.7 1041.7,391.0 1054.6,391.0" fill="none" stroke="#5f92c4" stroke-width="1.7" stroke-linejoin="round" stroke-linecap="butt"/><g font-size="9.4" fill="#626976" stroke="#626976" stroke-width=".22" text-anchor="end"><text x="809.5" y="328.9">100.00</text><text x="809.5" y="354.9">80.00</text><text x="809.5" y="380.9">60.00</text><text x="809.5" y="406.9">40.00</text><text x="809.5" y="432.9">20.00</text><text x="809.5" y="458.9">0</text></g><g font-size="9.4" fill="#626976" stroke="#626976" stroke-width=".22" text-anchor="middle"><text x="850.0" y="470.7">21:48</text><text x="884.7" y="470.7">21:50</text><text x="919.4" y="470.7">21:52</text><text x="954.1" y="470.7">21:54</text><text x="988.8" y="470.7">21:56</text><text x="1023.5" y="470.7">21:58</text></g><line x1="777.5" y1="491.8" x2="787.0" y2="491.8" stroke="#54b399" stroke-width="2.4" stroke-linecap="round"/><line x1="864.0" y1="491.8" x2="873.7" y2="491.8" stroke="#5f92c4" stroke-width="2.4" stroke-linecap="round"/><g font-size="9.4" fill="#5a6472" stroke="#5a6472" stroke-width=".2"><text x="792.7" y="495.1">Error rate (4xx)</text><text x="879.4" y="495.1">Fault rate (5xx)</text></g></svg>
</figure>
<figure>
<figcaption class="t" style="left:1084.5px;top:285px;font-size:12.2px;color:#1f2b38;font-weight:bold;-webkit-text-stroke-width:0;letter-spacing:0.37px">Latency <span class="pl">(</span>p50, p90, p99<span class="pr">)</span></figcaption>
<svg style="left:0;top:0" width="1431" height="723" viewBox="0 0 1431 723" font-family="Liberation Sans, Arial, sans-serif" role="img" aria-label="Latency (p50, p90, p99) chart"><line x1="1129.4" y1="326.35" x2="1367.6" y2="326.35" stroke="#dfe1e7" stroke-width="0.8" stroke-dasharray="3.1 2"/><line x1="1129.4" y1="352.35" x2="1367.6" y2="352.35" stroke="#dfe1e7" stroke-width="0.8" stroke-dasharray="3.1 2"/><line x1="1129.4" y1="378.35" x2="1367.6" y2="378.35" stroke="#dfe1e7" stroke-width="0.8" stroke-dasharray="3.1 2"/><line x1="1129.4" y1="404.35" x2="1367.6" y2="404.35" stroke="#dfe1e7" stroke-width="0.8" stroke-dasharray="3.1 2"/><line x1="1129.4" y1="430.35" x2="1367.6" y2="430.35" stroke="#dfe1e7" stroke-width="0.8" stroke-dasharray="3.1 2"/><line x1="1129.4" y1="456.55" x2="1367.6" y2="456.55" stroke="#d6d8dd" stroke-width="0.9"/><line x1="1163.4" y1="456.5" x2="1163.4" y2="460.4" stroke="#d6d8dd" stroke-width="0.9"/><line x1="1198.1" y1="456.5" x2="1198.1" y2="460.4" stroke="#d6d8dd" stroke-width="0.9"/><line x1="1232.8" y1="456.5" x2="1232.8" y2="460.4" stroke="#d6d8dd" stroke-width="0.9"/><line x1="1267.5" y1="456.5" x2="1267.5" y2="460.4" stroke="#d6d8dd" stroke-width="0.9"/><line x1="1302.2" y1="456.5" x2="1302.2" y2="460.4" stroke="#d6d8dd" stroke-width="0.9"/><line x1="1336.9" y1="456.5" x2="1336.9" y2="460.4" stroke="#d6d8dd" stroke-width="0.9"/><polyline points="1129.4,365.1 1176.6,365.1 1181.0,423.2 1246.1,423.2 1250.4,454.6 1333.4,454.6 1337.8,453.5 1350.3,453.5 1354.6,454.6 1367.6,454.6" fill="none" stroke="#54b399" stroke-width="1.7" stroke-linejoin="round" stroke-linecap="butt"/><polyline points="1129.4,333.6 1176.6,333.6 1181.0,418.6 1246.1,418.6 1250.4,453.8 1333.4,453.8 1337.8,341.4 1350.3,341.4 1354.6,453.8 1367.6,453.8" fill="none" stroke="#5f92c4" stroke-width="1.7" stroke-linejoin="round" stroke-linecap="butt"/><polyline points="1129.4,326.6 1176.6,326.6 1181.0,417.2 1246.1,417.2 1250.4,453.4 1333.4,453.4 1337.8,327.6 1350.3,327.6 1354.6,453.4 1367.6,453.4" fill="none" stroke="#d34a77" stroke-width="1.7" stroke-linejoin="round" stroke-linecap="butt"/><g font-size="9.4" fill="#626976" stroke="#626976" stroke-width=".22" text-anchor="end"><text x="1122.2" y="328.9">250.00</text><text x="1122.2" y="354.9">200.00</text><text x="1122.2" y="380.9">150.00</text><text x="1122.2" y="406.9">100.00</text><text x="1122.2" y="432.9">50.00</text><text x="1122.2" y="458.9">0</text></g><g font-size="9.4" fill="#626976" stroke="#626976" stroke-width=".22" text-anchor="middle"><text x="1163.2" y="470.7">21:48</text><text x="1197.9" y="470.7">21:50</text><text x="1232.6" y="470.7">21:52</text><text x="1267.3" y="470.7">21:54</text><text x="1302.0" y="470.7">21:56</text><text x="1336.7" y="470.7">21:58</text></g><line x1="1090.8" y1="491.8" x2="1100.2" y2="491.8" stroke="#54b399" stroke-width="2.4" stroke-linecap="round"/><line x1="1129.6" y1="491.8" x2="1138.9" y2="491.8" stroke="#5f92c4" stroke-width="2.4" stroke-linecap="round"/><line x1="1168.5" y1="491.8" x2="1177.8" y2="491.8" stroke="#d34a77" stroke-width="2.4" stroke-linecap="round"/><g font-size="9.4" fill="#5a6472" stroke="#5a6472" stroke-width=".2"><text x="1105.7" y="495.1">p50</text><text x="1144.6" y="495.1">p90</text><text x="1183.5" y="495.1">p99</text></g></svg>
</figure>
</div>
</main>
</body>
</html>
